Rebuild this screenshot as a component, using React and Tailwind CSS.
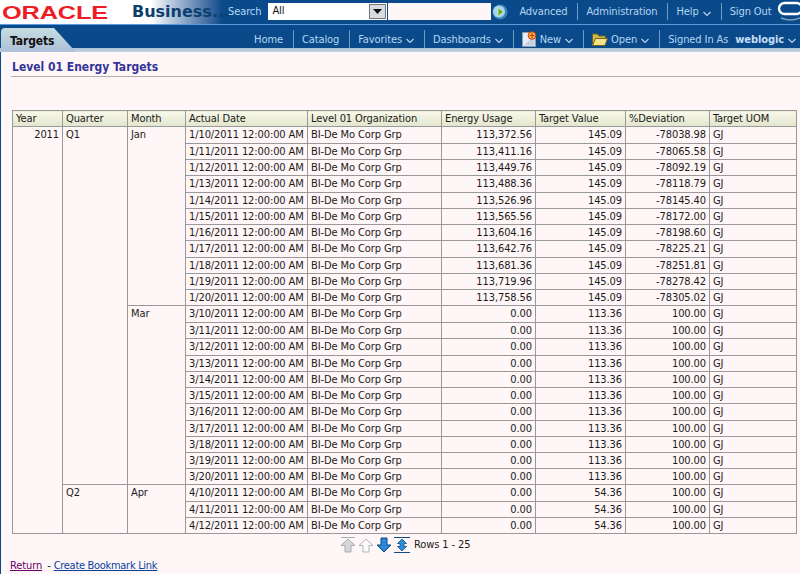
import React from "react";

// Hauteurs de lignes relevées sur la capture (16 ou 17px)
const tall = [0, 3, 7, 11, 13, 17, 22];

const jan = [
  ["1/10/2011", "113,372.56", "145.09", "-78038.98"],
  ["1/11/2011", "113,411.16", "145.09", "-78065.58"],
  ["1/12/2011", "113,449.76", "145.09", "-78092.19"],
  ["1/13/2011", "113,488.36", "145.09", "-78118.79"],
  ["1/14/2011", "113,526.96", "145.09", "-78145.40"],
  ["1/15/2011", "113,565.56", "145.09", "-78172.00"],
  ["1/16/2011", "113,604.16", "145.09", "-78198.60"],
  ["1/17/2011", "113,642.76", "145.09", "-78225.21"],
  ["1/18/2011", "113,681.36", "145.09", "-78251.81"],
  ["1/19/2011", "113,719.96", "145.09", "-78278.42"],
  ["1/20/2011", "113,758.56", "145.09", "-78305.02"],
];
const mar = ["10", "11", "12", "13", "14", "15", "16", "17", "18", "19", "20"].map((d) => [`3/${d}/2011`, "0.00", "113.36", "100.00"]);
const apr = ["10", "11", "12"].map((d) => [`4/${d}/2011`, "0.00", "54.36", "100.00"]);
const rows = [...jan, ...mar, ...apr];

const headers = ["Year", "Quarter", "Month", "Actual Date", "Level 01 Organization", "Energy Usage", "Target Value", "%Deviation", "Target UOM"];
const widths = ["w-[50px]", "w-[65px]", "w-[58px]", "w-[122px]", "w-[134px]", "w-[94px]", "w-[90px]", "w-[84px]", "w-[87px]"];

const cell = "border border-[#999] px-[3px] py-0 leading-[14px] whitespace-nowrap overflow-hidden";
const groupCell = cell + " align-top pt-px";

function Chevron() {
  return (
    <svg width="8" height="6" viewBox="0 0 8 6" className="ml-[4px] mt-[2px] shrink-0">
      <path d="M0.5 1 L4 4.5 L7.5 1" fill="none" stroke="#b5d3ee" strokeWidth="1.2" />
    </svg>
  );
}

function TopLink({ children, first, last }) {
  return (
    <span className={"flex items-center shrink-0 whitespace-nowrap h-[17px] pt-[2px] pl-[8px] " + (last ? "pr-[5px] " : "pr-[10px] ") + (first ? "" : "border-l border-[#6f9cc4]")}>{children}</span>
  );
}

function NavLink({ children, first, last }) {
  return (
    <span className={"flex items-center shrink-0 whitespace-nowrap h-[18px] pt-[2px] pl-[8px] " + (last ? "pr-[2px] " : "pr-[10px] ") + (first ? "" : "border-l border-[#6f9cc4]")}>{children}</span>
  );
}

function NewIcon() {
  return (
    <svg width="15" height="16" viewBox="0 0 15 16" className="mr-[3px] mb-[2px] shrink-0">
      <path d="M0.5 1.5 H10 L13.5 5 V15.5 H0.5 Z" fill="#e8edf5" stroke="#8d9ab0" />
      <path d="M1.5 14.5 L12.5 5 V14.5 Z" fill="#c4cfe0" />
      <circle cx="10" cy="4.5" r="3.8" fill="#f4c430" stroke="#c8321e" />
      <path d="M10 2 V7 M7.5 4.5 H12.5" stroke="#c8321e" strokeWidth="1.2" />
    </svg>
  );
}

function OpenIcon() {
  return (
    <svg width="16" height="13" viewBox="0 0 16 13" className="mr-[3px] mb-[2px] shrink-0">
      <path d="M0.5 12 V1 H5.5 L7 3 H13.5 V6" fill="#c9b94f" stroke="#6e6420" />
      <path d="M0.5 12.5 L3.5 5.5 H15.5 L13 12.5 Z" fill="#f3e48c" stroke="#6e6420" />
    </svg>
  );
}

function GoIcon() {
  return (
    <svg width="16" height="16" viewBox="0 0 16 16" className="shrink-0">
      <circle cx="8" cy="8" r="7.5" fill="#3c86bd" />
      <circle cx="7" cy="7.5" r="6" fill="#a9d3ec" />
      <path d="M6 3.5 L11.5 8 L6 12.5 Z" fill="#5fae2e" stroke="#e5f3d0" strokeWidth="0.7" />
    </svg>
  );
}

function OracleO() {
  return (
    <svg width="27" height="22" viewBox="0 0 27 22" className="shrink-0">
      <rect x="2" y="3" width="23" height="11" rx="5.5" fill="none" stroke="#fff" strokeWidth="2.4" />
      <path d="M4 18 Q13.5 22 23 18" fill="none" stroke="#7f9fc0" strokeWidth="1.5" />
    </svg>
  );
}

function PagerArrow({ up = true, bar, fill, stroke }) {
  return (
    <svg width="16" height="16" viewBox="0 0 16 16">
      {bar && <path d="M1 0.5 H15" stroke={stroke} />}
      <path
        d={up ? "M8 2 L15 8.5 H11 V15 H5 V8.5 H1 Z" : "M8 15 L15 8 H11 V1 H5 V8 H1 Z"}
        fill={fill}
        stroke={stroke}
        strokeLinejoin="round"
      />
    </svg>
  );
}

function LastRowsIcon() {
  return (
    <svg width="16" height="16" viewBox="0 0 16 16">
      <path d="M0 0.5 H16 M0 15.5 H16" stroke="#0a4a8a" />
      <path d="M8 2 L12.5 6.5 H10 V9.5 H12.5 L8 14 L3.5 9.5 H6 V6.5 H3.5 Z" fill="#2f8fd8" stroke="#0a4a8a" strokeWidth="0.8" />
    </svg>
  );
}

export default function App() {
  return (
    <div className="w-[800px] h-[574px] overflow-hidden bg-[#fff7f7] text-[11px] tracking-[-0.1px] text-[#1a1a1a] font-['DejaVu_Sans_Condensed','DejaVu_Sans',sans-serif]">
      {/* bandeau du haut */}
      <div className="flex h-[24px] bg-[#0a4a8a] text-[#b5d6f2]">
        <div className="w-[222px] shrink-0 pl-[3px] flex items-center bg-linear-to-r from-white from-[68%] to-[#0a4a8a]">
          <svg width="110" height="20" viewBox="0 0 110 20" className="shrink-0">
            <text x="-1" y="17" textLength="106" lengthAdjust="spacingAndGlyphs" fontFamily="Liberation Sans" fontWeight="700" fontSize="18" fill="#ee1c25">ORACLE</text>
          </svg>
          <span className="ml-[19px] font-['DejaVu_Sans'] font-bold text-[16px] tracking-normal whitespace-nowrap text-[#0c3f70]">Business...</span>
        </div>
        <span className="ml-[6px] mt-[5px] leading-[14px] shrink-0">Search</span>
        <div className="ml-[7px] mt-[3px] flex h-[17px] w-[119px] shrink-0 bg-white items-center text-[#111] pl-[4px]">
          All
          <span className="ml-auto mr-px w-[17px] h-[15px] flex items-center justify-center bg-[#d8dce0] border border-[#777]">
            <svg width="9" height="5" viewBox="0 0 9 5"><path d="M0 0 H9 L4.5 5 Z" fill="#111" /></svg>
          </span>
        </div>
        <div className="ml-px mt-[3px] h-[17px] w-[103px] shrink-0 bg-[#fff7f7]" />
        <div className="ml-px mt-[4px]"><GoIcon /></div>
        <div className="ml-[3px] mt-[3px] flex shrink-0">
          <TopLink first>Advanced</TopLink>
          <TopLink>Administration</TopLink>
          <TopLink>Help<Chevron /></TopLink>
          <TopLink last>Sign Out</TopLink>
        </div>
        <OracleO />
      </div>
      <div className="h-px bg-[#5b9be0]" />

      {/* barre de navigation */}
      <div className="relative h-[23px] bg-[#0a4a8a] flex justify-end pt-[5px] pr-[2px] text-[#b5d6f2]">
        <NavLink first>Home</NavLink>
        <NavLink>Catalog</NavLink>
        <NavLink>Favorites<Chevron /></NavLink>
        <NavLink>Dashboards<Chevron /></NavLink>
        <NavLink><NewIcon />New<Chevron /></NavLink>
        <NavLink><OpenIcon />Open<Chevron /></NavLink>
        <NavLink last>Signed In As<span className="ml-[7px] font-bold text-[#c5def5]">weblogic</span><Chevron /></NavLink>
        <div className="absolute left-0 top-[3px] w-[76px] h-[24px]">
          <svg width="76" height="24" viewBox="0 0 76 24" className="absolute left-0 top-0">
            <defs>
              <linearGradient id="tab" x1="0" y1="0" x2="0" y2="1">
                <stop offset="0" stopColor="#c6dde0" />
                <stop offset="1" stopColor="#aebfd8" />
              </linearGradient>
            </defs>
            <path d="M1 24 V4 Q1 0 5 0 H54 L74 22 L76 24 Z" fill="url(#tab)" />
          </svg>
          <span className="absolute left-[10px] top-[6px] font-bold text-[12px] leading-[14px] text-[#111]">Targets</span>
        </div>
      </div>
      <div className="h-[4px] bg-linear-to-b from-[#a9bfd6] to-[#c8d4e4]" />

      {/* contenu */}
      <div className="border-l border-[#0a4a8a] h-[522px]">
        <div className="ml-[10px] h-[25px] border-b border-[#b5b0b0] pt-[7px] pl-px">
          <h1 className="font-bold text-[12px] tracking-normal leading-[16px] text-[#333399]">Level 01 Energy Targets</h1>
        </div>

        <table className="ml-[11px] mt-[33px] table-fixed border-collapse w-[785px]">
          <colgroup>
            {widths.map((w) => <col key={w} className={w} />)}
          </colgroup>
          <thead>
            <tr className="h-[16px]">
              {headers.map((h) => (
                <th key={h} className={cell + " text-left font-normal bg-linear-to-b from-[#f8f8ea] to-[#e2e6cc]"}>{h}</th>
              ))}
            </tr>
          </thead>
          <tbody>
            {rows.map((r, i) => (
              <tr key={r[0]} className={tall.includes(i) ? "h-[17px]" : "h-[16px]"}>
                {i === 0 && <td rowSpan={25} className={groupCell + " text-right"}>2011</td>}
                {i === 0 && <td rowSpan={22} className={groupCell}>Q1</td>}
                {i === 22 && <td rowSpan={3} className={groupCell}>Q2</td>}
                {i === 0 && <td rowSpan={11} className={groupCell}>Jan</td>}
                {i === 11 && <td rowSpan={11} className={groupCell}>Mar</td>}
                {i === 22 && <td rowSpan={3} className={groupCell}>Apr</td>}
                <td className={cell}>{r[0]} 12:00:00 AM</td>
                <td className={cell}>BI-De Mo Corp Grp</td>
                <td className={cell + " text-right"}>{r[1]}</td>
                <td className={cell + " text-right"}>{r[2]}</td>
                <td className={cell + " text-right"}>{r[3]}</td>
                <td className={cell}>GJ</td>
              </tr>
            ))}
          </tbody>
        </table>

        <div className="mt-[3px] ml-[339px] flex items-center h-[16px] gap-[2px]">
          <PagerArrow bar fill="#d5d8da" stroke="#a8acae" />
          <PagerArrow fill="#fbfcfc" stroke="#b0b4b6" />
          <PagerArrow up={false} fill="#2f86d4" stroke="#0a4a8a" />
          <LastRowsIcon />
          <span className="ml-[2px] leading-[14px]">Rows 1 - 25</span>
        </div>
        <div className="ml-[9px] mt-[6px] leading-[14px]">
          <a className="underline text-[#660066]">Return</a>
          <span className="ml-[5px]">- </span>
          <a className="underline tracking-[-0.3px] text-[#0a3f9c]">Create Bookmark Link</a>
        </div>
      </div>
    </div>
  );
}
